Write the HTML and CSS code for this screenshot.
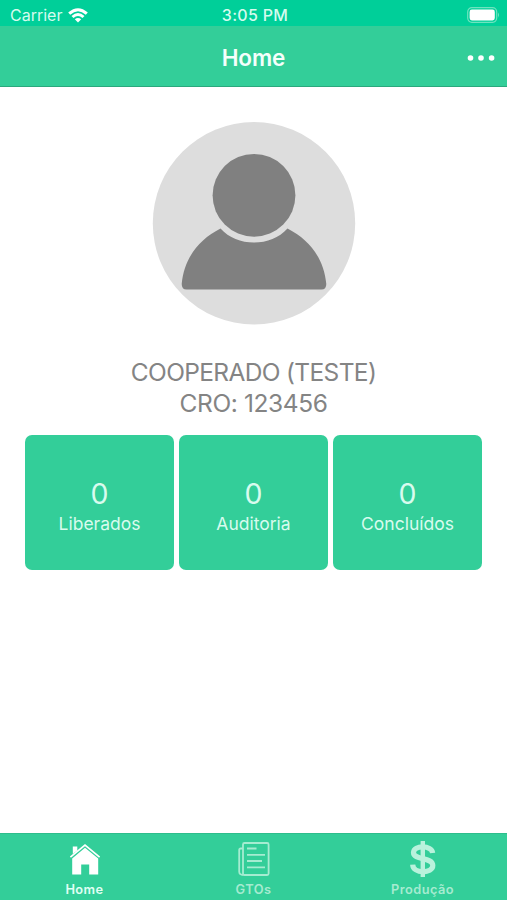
FILE: index.html
```html
<!DOCTYPE html>
<html lang="pt-BR">
<head>
  <meta charset="UTF-8">
  <meta name="viewport" content="width=device-width, initial-scale=1">
  <title>Home</title>
  <link rel="stylesheet" href="styles.css">
</head>
<body>

  <!-- Barra de status -->
  <div class="status-bar">
    <div class="carrier">
      <span>Carrier</span>
      <svg class="wifi" width="20" height="15" viewBox="0 0 20 15">
        <path d="M0.2 4.6 Q10 -4 19.8 4.6 L17.8 6.7 Q10 -0.3 2.2 6.7 Z"/>
        <path d="M3.5 8 Q10 2.2 16.5 8 L14.5 10.1 Q10 6 5.5 10.1 Z"/>
        <path d="M6.8 11.3 Q10 8.5 13.2 11.3 L10 14.6 Z"/>
      </svg>
    </div>
    <span class="clock">3:05 PM</span>
    <div class="battery-area">
      <svg width="33" height="16" viewBox="0 0 33 16">
        <rect x="0.7" y="0.7" width="29" height="14.6" rx="4.2" fill="none" stroke="#6fe3bf" stroke-width="1.2"/>
        <rect x="2.6" y="2.6" width="25.2" height="10.8" rx="2.3" fill="#fff"/>
        <path d="M31 5.6 Q33 8 31 10.4 Z" fill="#6fe3bf"/>
      </svg>
    </div>
  </div>

  <!-- Cabeçalho -->
  <header class="nav-bar">
    <h1>Home</h1>
    <button class="more" aria-label="Mais opções">
      <svg width="28" height="8" viewBox="0 0 28 8">
        <circle cx="3.5" cy="4" r="2.8"/>
        <circle cx="14" cy="4" r="2.8"/>
        <circle cx="24.6" cy="4" r="2.8"/>
      </svg>
    </button>
  </header>

  <!-- Conteúdo principal -->
  <main class="content">
    <svg class="avatar" width="204" height="204" viewBox="0 0 204 204">
      <circle cx="102" cy="102.3" r="101.2" fill="#dddddd"/>
      <circle cx="102" cy="74.3" r="41.4" fill="#808080"/>
      <path d="M68.5 107.5 C77 117 89 121.5 102 121.5 C115 121.5 127 117 135.5 107.5 C158 119 172 138 174.3 163 Q174.3 168.5 169.5 168.5 H34.5 Q29.7 168.5 29.7 163 C32 138 46 119 68.5 107.5 Z" fill="#808080"/>
    </svg>

    <div class="user">
      <p class="user-name">COOPERADO (TESTE)</p>
      <p class="user-cro">CRO: 123456</p>
    </div>

    <div class="cards">
      <div class="card">
        <span class="total">0</span>
        <span class="label">Liberados</span>
      </div>
      <div class="card">
        <span class="total">0</span>
        <span class="label">Auditoria</span>
      </div>
      <div class="card">
        <span class="total">0</span>
        <span class="label">Concluídos</span>
      </div>
    </div>
  </main>

  <!-- Menu inferior -->
  <nav class="tab-bar">
    <a class="tab active">
      <svg width="34" height="36" viewBox="0 0 34 36">
        <path d="M4.8 5.5 H9.3 V9.5 L4.8 13 Z" fill="#fff"/>
        <path d="M2.4 16.2 L17 4.2 L31.6 16.2" fill="none" stroke="#fff" stroke-width="1.7"/>
        <path d="M17 6.8 L30.2 17.5 V33.5 H21.2 V23.5 H13.2 V33.5 H4.2 V17.5 Z" fill="#fff"/>
      </svg>
      <span>Home</span>
    </a>
    <a class="tab">
      <svg width="34" height="36" viewBox="0 0 34 36" fill="none" stroke="#a5ecd1" stroke-width="1.8">
        <rect x="6" y="2" width="25.6" height="32" rx="1.5"/>
        <path d="M6 7.5 H3.7 Q2.2 7.5 2.2 9 V30.5 Q2.2 34 6.5 34"/>
        <path d="M10 7.5 H19.5 M10 13.8 H28 M10 20 H25 M10 26.4 H28"/>
      </svg>
      <span>GTOs</span>
    </a>
    <a class="tab">
      <svg width="34" height="36" viewBox="0 0 34 36" fill="none" stroke="#b9f2dc">
        <path d="M16.8 0.8 V35.8" stroke-width="4.4" stroke-linecap="round"/>
        <path d="M26.6 12 C26 4.2 7.5 3.6 7.5 11.6 C7.5 20 26.8 15.2 26.8 24.6 C26.8 33 7 33 6.7 23.6" stroke-width="5.2"/>
      </svg>
      <span>Produção</span>
    </a>
  </nav>

</body>
</html>
```
FILE: styles.css
```css
* {
  box-sizing: border-box;
}

body {
  margin: 0;
  height: 100vh;
  display: flex;
  flex-direction: column;
  overflow: hidden;
  background: #fff;
  font-family: Inter, "Liberation Sans", sans-serif;
}

/* Barra de status */
.status-bar {
  display: flex;
  align-items: center;
  height: 26px;
  padding: 4px 7px 0 10px;
  background: #00cf99;
  color: #d5fbef;
  font-size: 16px;
}

.carrier,
.battery-area {
  flex: 1;
  display: flex;
  align-items: center;
}

.carrier {
  gap: 6px;
}

.wifi {
  fill: #fff;
}

.clock {
  font-weight: 500;
  font-size: 16px;
  letter-spacing: 0.3px;
}

.battery-area {
  justify-content: flex-end;
}

/* Cabeçalho */
.nav-bar {
  display: flex;
  align-items: center;
  height: 61px;
  padding: 0 12px;
  background: #33ce99;
  border-bottom: 1px solid #2ba87d;
}

.nav-bar h1 {
  flex: 1;
  margin: 0 -28px 0 0;
  padding-top: 2px;
  color: #f4fffb;
  font-size: 22.5px;
  font-weight: 600;
  letter-spacing: -0.1px;
  text-align: center;
}

.more {
  display: flex;
  padding: 3px 0 0;
  border: 0;
  background: none;
  fill: #fff;
}

/* Conteúdo */
.content {
  flex: 1;
  display: flex;
  flex-direction: column;
  align-items: center;
  padding: 34px 25px 0;
}

.user {
  margin-top: 32px;
  color: #848484;
  font-size: 24.5px;
  line-height: 31px;
  text-align: center;
}

.user p {
  margin: 0;
}

.user-name {
  letter-spacing: -0.65px;
}

.user-cro {
  letter-spacing: -0.4px;
}

.cards {
  display: flex;
  gap: 5px;
  width: 100%;
  margin-top: 16px;
}

.card {
  flex: 1;
  display: flex;
  flex-direction: column;
  align-items: center;
  justify-content: center;
  height: 135px;
  padding-top: 7px;
  border-radius: 7px;
  background: #33ce99;
  color: #d8fbee;
}

.total {
  font-size: 28.5px;
  line-height: 34px;
}

.label {
  font-size: 17.5px;
  line-height: 25px;
}

/* Menu inferior */
.tab-bar {
  display: flex;
  height: 67px;
  border-top: 1px solid #2ebd8c;
  background: #33ce99;
}

.tab {
  flex: 1;
  display: flex;
  flex-direction: column;
  align-items: center;
  padding-top: 7px;
  color: #a5ebd0;
  font-size: 12.8px;
  font-weight: 600;
  line-height: 16px;
  letter-spacing: 0.45px;
}

.tab span {
  margin-top: 5px;
}

.tab.active {
  color: #e0fff4;
}
```
